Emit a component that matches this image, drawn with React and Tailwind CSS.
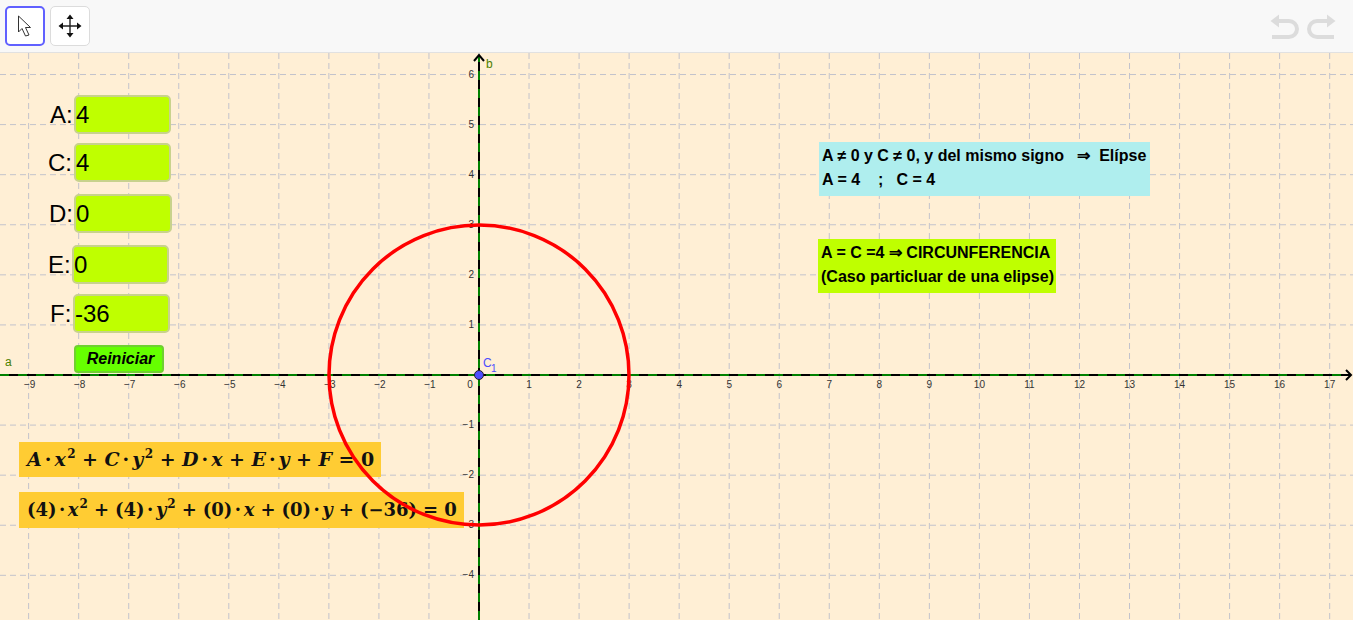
import React from 'react';

const xs = Array.from({ length: 27 }, (_, i) => i - 9);
const ys = [6, 5, 4, 3, 2, 1, -1, -2, -3, -4];
const px = (v) => 479 + v * 50.04;
const py = (v) => 375 - v * 50.08;
const num = (n) => (n < 0 ? `\u2212${-n}` : `${n}`);

const inputs = [
  { label: 'A:', value: '4', box: 'left-[74px] top-[42px] w-[97px]', text: 'left-[50px] top-[42px]' },
  { label: 'C:', value: '4', box: 'left-[74px] top-[90px] w-[97px]', text: 'left-[48px] top-[90px]' },
  { label: 'D:', value: '0', box: 'left-[74px] top-[141px] w-[98px]', text: 'left-[49px] top-[141px]' },
  { label: 'E:', value: '0', box: 'left-[72px] top-[192px] w-[97px]', text: 'left-[48px] top-[192px]' },
  { label: 'F:', value: '-36', box: 'left-[73px] top-[241px] w-[97px]', text: 'left-[50px] top-[241px]' },
];

const V = ({ children }) => <i>{children}</i>;
const S = () => <sup className="text-[12px] leading-none relative -top-[8px] align-baseline ml-[1px]">2</sup>;
const Op = ({ children }) => <span className="mx-[6px]">{children}</span>;
const Dot = () => <span className="mx-[2.5px]">·</span>;

function Grid() {
  return (
    <svg className="absolute inset-0" width="1353" height="567" viewBox="0 53 1353 567">
      <g stroke="#c3c3cc" strokeWidth="1" strokeDasharray="6 4">
        {xs.map((v) => (
          <line key={v} x1={px(v)} y1="53" x2={px(v)} y2="620" />
        ))}
        {ys.map((v) => (
          <line key={v} x1="0" y1={py(v)} x2="1353" y2={py(v)} />
        ))}
      </g>
      <line x1="0" y1="375" x2="1350" y2="375" stroke="#000" strokeWidth="2" />
      <line x1="0" y1="375" x2="1350" y2="375" stroke="#008000" strokeWidth="2" strokeDasharray="9 9" />
      <line x1="479" y1="620" x2="479" y2="56" stroke="#000" strokeWidth="2" />
      <line x1="479" y1="620" x2="479" y2="56" stroke="#008000" strokeWidth="2" strokeDasharray="9 9" />
      <path d="M1346 370 L1351 375 L1346 380" fill="none" stroke="#000" strokeWidth="2" />
      <path d="M474 61 L479 55 L484 61" fill="none" stroke="#000" strokeWidth="2" />
      <g fontSize="10" fill="#333" textAnchor="middle">
        {xs.filter((v) => v !== 0).map((v) => (
          <text key={v} x={px(v) + (v < 0 ? 1 : 0)} y="388">{num(v)}</text>
        ))}
        <text x="470" y="388">0</text>
      </g>
      <g fontSize="10" fill="#333" textAnchor="end">
        {ys.map((v) => (
          <text key={v} x="474" y={py(v) + 3}>{num(v)}</text>
        ))}
      </g>
      <text x="5" y="366" fontSize="12" fill="#4d8000">a</text>
      <text x="486" y="68" fontSize="12" fill="#4d8000">b</text>
    </svg>
  );
}

function MoveIcon() {
  return (
    <svg width="24" height="24" viewBox="0 0 24 24">
      <path d="M12 4v16M4 12h16" fill="none" stroke="#222" strokeWidth="1.4" />
      <path d="M12 0.5 15.5 5H8.5zM12 23.5 15.5 19H8.5zM0.5 12 5 8.5v7zM23.5 12 19 8.5v7z" fill="#111" />
    </svg>
  );
}

export default function App() {
  return (
    <div className="w-[1353px] h-[620px] flex flex-col bg-white overflow-hidden [font-family:'Liberation_Sans',Arial,sans-serif]">
      <div className="h-[53px] shrink-0 flex items-start justify-between bg-[#f8f8f8] border-b border-[#e1e1e1] pl-[5px] pr-[17px] pt-[6px]">
        <div className="flex gap-[5px]">
          <button className="w-[40px] h-[40px] flex items-center justify-center rounded-[5px] bg-white border-2 border-[#6060ff]">
            <svg width="16" height="22" viewBox="0 0 16 22">
              <path d="M1.5 1 V17 L5 13.5 L8.5 21 L12 20 L8.5 12.5 L13.5 12.5 Z" fill="#fff" stroke="#333" strokeWidth="1" />
            </svg>
          </button>
          <button className="w-[40px] h-[40px] flex items-center justify-center rounded-[5px] bg-white border border-[#dcdcdc]">
            <MoveIcon />
          </button>
        </div>
        <div className="flex gap-[8px] pt-[8px]">
          <svg width="29" height="25" viewBox="0 0 29 25">
            <path d="M7 7 H19 A8 8 0 0 1 19 23 H2" fill="none" stroke="#dcdcdc" strokeWidth="4" />
            <path d="M0.5 7 L9 0.5 V13.5 Z" fill="#dcdcdc" />
          </svg>
          <svg width="29" height="25" viewBox="0 0 29 25">
            <path d="M22 7 H10 A8 8 0 0 0 10 23 H27" fill="none" stroke="#dcdcdc" strokeWidth="4" />
            <path d="M28.5 7 L20 0.5 V13.5 Z" fill="#dcdcdc" />
          </svg>
        </div>
      </div>

      <div className="relative flex-1 bg-[#ffefd5] overflow-hidden">
        <Grid />

        {inputs.map((f) => (
          <React.Fragment key={f.label}>
            <span className={`absolute h-[40px] leading-[40px] text-[24px] text-black ${f.text}`}>{f.label}</span>
            <div className={`absolute h-[39px] leading-[35px] text-[24px] text-black rounded-[5px] bg-[#bfff00] border-2 border-[#c8d28c] ${f.box}`}>
              {f.value}
            </div>
          </React.Fragment>
        ))}

        <button className="absolute left-[74px] top-[292px] w-[90px] h-[28px] flex items-center justify-center pl-[3px] rounded-[4px] bg-[#66ff00] border-2 border-[#70d030] text-[16px] font-bold italic text-black">
          Reiniciar
        </button>

        <div className="absolute left-[819px] top-[89px] w-[331px] h-[54px] pl-[3px] pt-[2px] bg-[#afeeee] text-[16px] leading-[24px] font-bold text-black whitespace-pre">
          {'A ≠ 0 y C ≠ 0, y del mismo signo   ⇒  Elípse\nA = 4    ;   C = 4'}
        </div>
        <div className="absolute left-[818px] top-[186px] w-[238px] h-[54px] pl-[3px] pt-[2px] bg-[#bfff00] text-[16px] leading-[24px] font-bold text-black whitespace-pre">
          {'A = C =4 ⇒ CIRCUNFERENCIA\n(Caso particluar de una elipse)'}
        </div>

        <div className="absolute left-[19px] top-[389px] w-[362px] h-[35px] pl-[8px] leading-[35px] bg-[#ffcc33] text-[19px] tracking-[0.5px] font-bold text-[#111] whitespace-nowrap [font-family:'DejaVu_Serif',serif]">
          <V>A</V><Dot /><V>x</V><S /><Op>+</Op><V>C</V><Dot /><V>y</V><S /><Op>+</Op><V>D</V><Dot /><V>x</V><Op>+</Op><V>E</V><Dot /><V>y</V><Op>+</Op><V>F</V><Op>=</Op>0
        </div>
        <div className="absolute left-[19px] top-[439px] w-[445px] h-[36px] pl-[8px] leading-[36px] bg-[#ffcc33] text-[18px] font-bold text-[#111] whitespace-nowrap [font-family:'DejaVu_Serif',serif]">
          (4)<Dot /><V>x</V><S /><Op>+</Op>(4)<Dot /><V>y</V><S /><Op>+</Op>(0)<Dot /><V>x</V><Op>+</Op>(0)<Dot /><V>y</V><Op>+</Op>(−36)<Op>=</Op>0
        </div>

        <svg className="absolute inset-0" width="1353" height="567" viewBox="0 53 1353 567">
          <circle cx="479" cy="375" r="150" fill="none" stroke="#ff0000" strokeWidth="3.5" />
          <circle cx="479" cy="375" r="4.5" fill="#4d4dff" stroke="#222" strokeWidth="1" />
          <text x="483" y="367" fontSize="12" fill="#4d4dff">C</text>
          <text x="491" y="372" fontSize="10" fill="#4d4dff">1</text>
        </svg>
      </div>
    </div>
  );
}
